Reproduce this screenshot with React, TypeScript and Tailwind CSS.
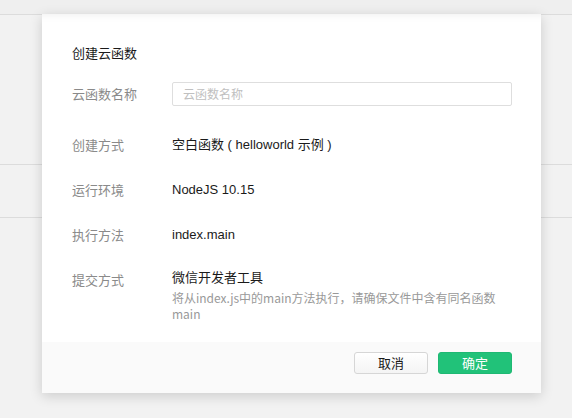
import React from "react";

const cjk = { fontFamily: '"Liberation Sans", "Noto Sans CJK SC", sans-serif' };
const cjkOnly = { fontFamily: '"Noto Sans CJK SC", sans-serif' };

function Row({ label, children, labelOffset = 0 }: { label: string; children: React.ReactNode; labelOffset?: number }) {
  return (
    <div className="flex">
      <div className="w-[100px] shrink-0 text-[13px] leading-[18px] text-[#8a8a8a]" style={{ ...cjkOnly, marginTop: labelOffset }}>
        {label}
      </div>
      <div className="flex-1">{children}</div>
    </div>
  );
}

export default function App() {
  return (
    <div className="relative h-[418px] w-[572px] overflow-hidden bg-[#f2f2f2]" style={cjk}>
      {/* background page */}
      <div className="h-[15px] border-b border-[#dcdcdc] bg-[#efefef]" />
      <div className="h-[150px] border-b border-[#dcdcdc]" />
      <div className="h-[53px] border-b border-[#dcdcdc]" />

      {/* dialog */}
      <div className="absolute left-[42px] top-[14px] w-[499px] bg-white shadow-[0_3px_12px_rgba(0,0,0,0.16)]">
        <div className="pb-[20px] pl-[30px] pr-[29px] pt-[30px] shadow-[inset_0_10px_10px_-10px_rgba(0,0,0,0.08)]">
          <div className="text-[13px] leading-[18px] text-[#1a1a1a]" style={cjkOnly}>
            创建云函数
          </div>

          <div className="mt-[20px] flex items-center">
            <div className="w-[100px] shrink-0 text-[13px] leading-[18px] text-[#8a8a8a]" style={cjkOnly}>
              云函数名称
            </div>
            <div className="flex h-[24px] flex-1 items-center rounded-[2px] border border-[#dedede] bg-white pl-[10px] text-[12px] text-[#c0c0c0]" style={cjkOnly}>
              云函数名称
            </div>
          </div>

          <div className="mt-[30px] flex flex-col gap-[27px]">
            <Row label="创建方式">
              <div className="text-[13px] leading-[18px] text-[#1a1a1a]">空白函数 ( helloworld 示例 )</div>
            </Row>
            <Row label="运行环境">
              <div className="text-[13px] leading-[18px] text-[#1a1a1a]">NodeJS 10.15</div>
            </Row>
            <Row label="执行方法">
              <div className="text-[13px] leading-[18px] text-[#1a1a1a]">index.main</div>
            </Row>
            <div className="-mt-[3px]">
              <Row label="提交方式" labelOffset={3}>
                <div className="text-[13px] leading-[18px] text-[#1a1a1a]" style={cjkOnly}>微信开发者工具</div>
                <div className="mt-[4px] text-[12px] leading-[16px] text-[#999999]" style={cjkOnly}>
                  <div className="whitespace-nowrap">将从index.js中的main方法执行，请确保文件中含有同名函数</div>
                  <div>main</div>
                </div>
              </Row>
            </div>
          </div>
        </div>

        <div className="flex h-[51px] justify-end gap-[10px] bg-[#fafafa] pr-[29px] pt-[10px]">
          <button className="h-[22px] w-[74px] rounded-[3px] border border-[#d6d6d6] bg-gradient-to-b from-white to-[#f4f4f4] text-[13px] leading-[20px] text-[#1a1a1a]" style={cjkOnly}>
            取消
          </button>
          <button className="h-[22px] w-[74px] rounded-[3px] border border-[#1fb873] bg-[#21c279] text-[13px] leading-[20px] text-white" style={cjkOnly}>
            确定
          </button>
        </div>
      </div>
    </div>
  );
}
